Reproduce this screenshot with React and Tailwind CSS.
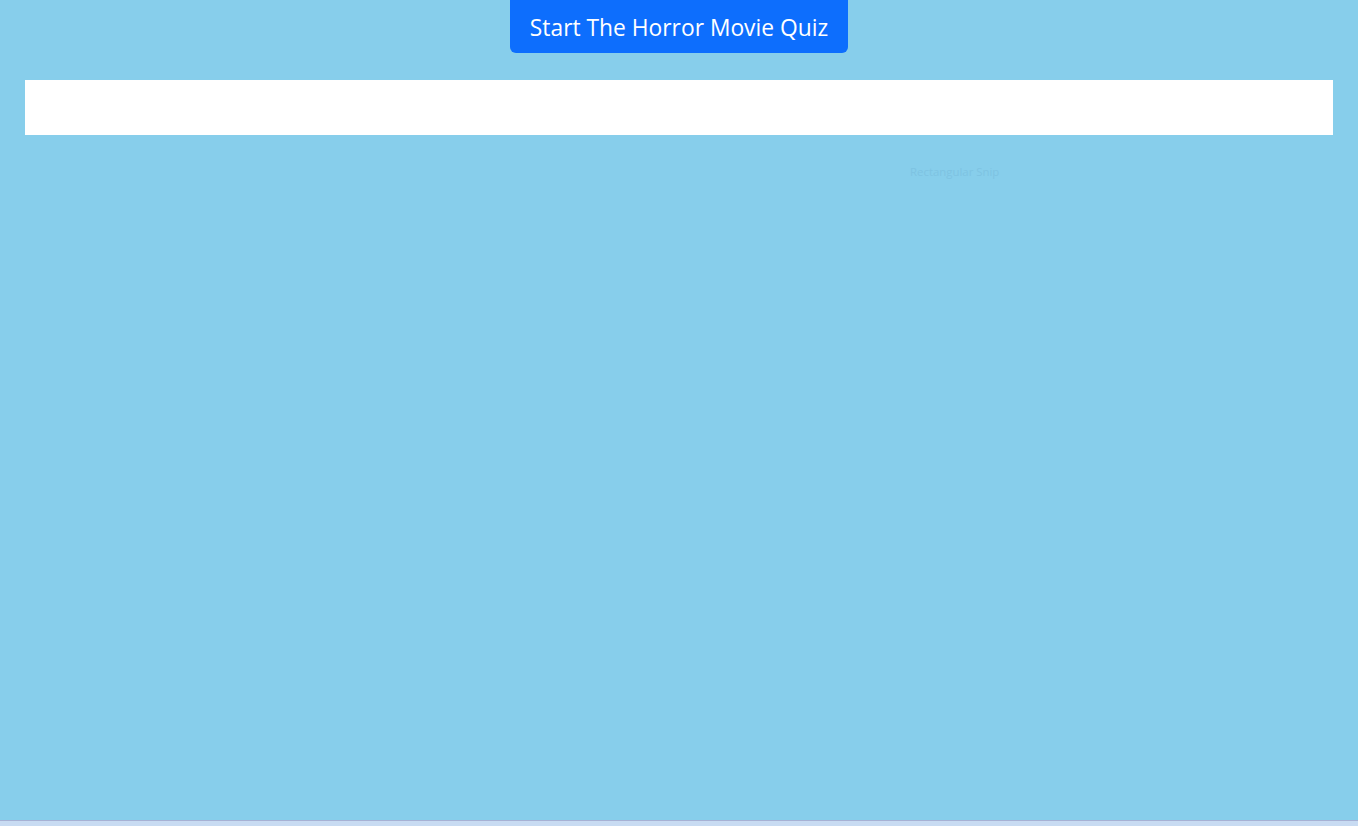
export default function App() {
  return (
    <div className="flex h-[826px] w-full flex-col bg-[#87ceeb]" style={{ fontFamily: '"Open Sans", "Noto Sans", sans-serif' }}>
      <div className="relative flex flex-1 flex-col">
        <div className="flex justify-center">
          <button className="flex h-[53px] w-[338px] items-center justify-center rounded-b-[6px] bg-[#0d6efd] pt-[3px] text-[22.8px] text-white">
            Start The Horror Movie Quiz
          </button>
        </div>
        <div className="mx-[25px] mt-[27px] h-[55px] bg-white" />
        <div className="absolute left-[910px] top-[163px] text-[11.4px] text-[#7ec3e2]">Rectangular Snip</div>
      </div>
      <div className="h-[6px] border-t border-[#a7b1d4] bg-[#c8dbf2]" />
    </div>
  );
}
